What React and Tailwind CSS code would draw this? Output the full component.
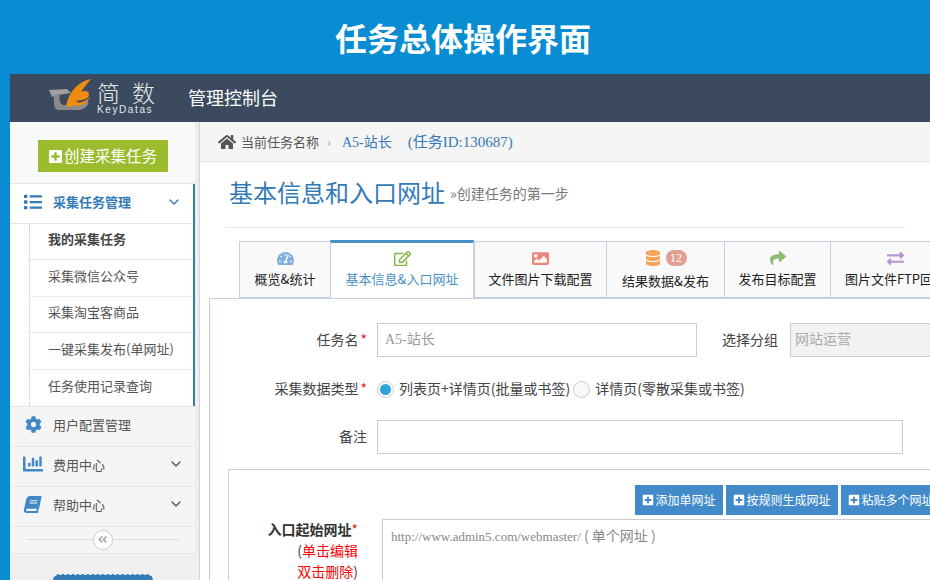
import React from 'react';
import {
	FaBook,
	FaChartBar,
	FaCog,
	FaDatabase,
	FaExchangeAlt,
	FaHome,
	FaImage,
	FaList,
	FaPlusSquare,
	FaRegEdit,
	FaShare,
	FaTachometerAlt,
	FaAngleDoubleLeft,
} from 'react-icons/fa';
import { ChevronDown } from 'lucide-react';

const subMenu = ['我的采集任务', '采集微信公众号', '采集淘宝客商品', '一键采集发布(单网址)', '任务使用记录查询'];

const urlButtons = [
	{ text: '添加单网址', width: 'w-[88px]' },
	{ text: '按规则生成网址', width: 'w-[112px]' },
	{ text: '粘贴多个网址', width: 'w-[100px]' },
];

const Logo = () => (
	<div className="flex h-[46px] items-center">
		<svg width="52" height="46" viewBox="0 0 52 46">
			<path d="M5 15 L23 14 L27 18 L14 20 L8 22 Z" fill="#a0a0a0" />
			<path d="M10 20 C10 27 9 34 14 35 L36 35 C43 33 45 29 44 26 C40 26 37 28 33 30 L19 30 C15 28 15 23 16 19 Z" fill="#8a8a8a" />
			<path d="M47 4 C36 6 25 15 22 31 L28 32 C32 24 39 13 47 4 Z" fill="#ee8b10" />
			<path d="M28 22 C34 15 46 14 45 20 C44 25 37 25 32 26 C35 29 41 27 46 22 C42 31 30 34 27 27 Z" fill="#ee8b10" />
		</svg>
		<div className="ml-[1px] flex flex-col items-start text-[#e8e8e8]">
			<span className="mb-[1px] text-[23px] leading-[23px] tracking-[12px] font-light">简数</span>
			<span className="font-['Liberation_Sans',sans-serif] text-[10px] leading-[10px] tracking-[1.6px]">KeyDatas</span>
		</div>
	</div>
);

const Sidebar = () => (
	<div className="flex w-[185px] shrink-0 flex-col overflow-hidden bg-[#f0f0f0]">
		<div className="flex h-[62px] shrink-0 items-center justify-center border-b border-[#e5e5e5] bg-[#f9f9f9] pt-[7px]">
			<button className="flex h-[32px] w-[130px] items-center justify-center gap-[1px] bg-[#9cbc2f] text-[15.5px] text-white">
				<FaPlusSquare size={15} />
				创建采集任务
			</button>
		</div>
		<div className="shrink-0 border-r-2 border-[#337ab7] bg-white">
			<div className="flex h-[40px] items-center border-b border-[#e5e5e5] pb-[3px] pl-[14px] pr-[11px] text-[#337ab7]">
				<FaList size={18} />
				<span className="ml-[11px] flex-1 text-[13px] font-bold">采集任务管理</span>
				<ChevronDown size={16} />
			</div>
			<div className="ml-[19px] border-l border-dotted border-[#b8c4d0]">
				{subMenu.map((name, i) => (
					<div
						key={name}
						className={`flex h-[36.4px] items-center border-b border-dotted border-[#ddd] pb-[5px] pl-[18px] text-[13px] last:border-b-0 ${i === 0 ? 'font-bold text-[#444]' : 'text-[#555]'}`}
					>
						{name}
					</div>
				))}
			</div>
		</div>
		<div className="flex h-[41px] shrink-0 items-center border-y border-[#e5e5e5] bg-[#f5f5f5] pb-[4px] pl-[15px] text-[13px] text-[#555]">
			<FaCog size={17} className="text-[#4188c6]" />
			<span className="ml-[11px]">用户配置管理</span>
		</div>
		<div className="flex h-[40px] shrink-0 items-center border-b border-[#e5e5e5] bg-[#f5f5f5] pb-[4px] pl-[13px] pr-[11px] text-[13px] text-[#555]">
			<FaChartBar size={20} className="text-[#4188c6]" />
			<span className="ml-[10px] flex-1">费用中心</span>
			<ChevronDown size={16} />
		</div>
		<div className="flex h-[40px] shrink-0 items-center border-b border-[#e5e5e5] bg-[#f5f5f5] pb-[4px] pl-[14px] pr-[11px] text-[13px] text-[#555]">
			<FaBook size={17} className="-skew-x-12 text-[#4188c6]" />
			<span className="ml-[12px] flex-1">帮助中心</span>
			<ChevronDown size={16} />
		</div>
		<div className="flex h-[27px] shrink-0 items-center border-b border-[#e5e5e5] bg-[#f5f5f5] px-[16px]">
			<div className="h-px flex-1 bg-[#ddd]" />
			<div className="flex h-[20px] w-[20px] items-center justify-center rounded-full border border-[#ccc] bg-white text-[#aaa]">
				<FaAngleDoubleLeft size={11} />
			</div>
			<div className="h-px flex-1 bg-[#ddd]" />
		</div>
		<div className="flex h-[26px] shrink-0 justify-center pt-[20px]">
			<div className="h-[10px] w-[100px] shrink-0 rounded-t-[6px] border-t border-dashed border-[#d8e4f0] bg-[#337ab7]" />
		</div>
	</div>
);

const tabs = [
	{ name: '概览&统计', icon: <FaTachometerAlt size={17} className="text-[#7fb0dc]" />, width: 'w-[91px]' },
	{ name: '基本信息&入口网址', icon: <FaRegEdit size={17} className="text-[#7cb342]" />, width: 'w-[144px]', active: true },
	{ name: '文件图片下载配置', icon: <FaImage size={17} className="text-[#e9877a]" />, width: 'w-[132px]' },
	{ name: '结果数据&发布', icon: <FaDatabase size={16} className="text-[#f6a35c]" />, width: 'w-[118px]', badge: '12' },
	{ name: '发布目标配置', icon: <FaShare size={16} className="text-[#8dbb72]" />, width: 'w-[106px]' },
	{ name: '图片文件FTP回传', icon: <FaExchangeAlt size={17} className="text-[#b794d8]" />, width: 'w-[130px]' },
];

const Tabs = () => (
	<div className="ml-[39px] flex h-[57px] items-stretch">
		{tabs.map((tab) => (
			<div
				key={tab.name}
				className={`relative flex shrink-0 flex-col items-center border-l border-[#c4d0df] ${tab.width} ${
					tab.active
						? 'z-10 -mt-px h-[58px] border-x border-t-[3px] border-t-[#4a90c2] bg-white pt-[6px] text-[13px] text-[#4a90c2]'
						: `border-t bg-[#f9f9f9] pt-[7px] text-[13px] text-[#222] ${tab.badge ? 'h-[58px] border-b-2' : 'border-b'}`
				}`}
			>
				<div className="flex h-[18px] items-center gap-[5px]">
					{tab.icon}
					{tab.badge && (
						<span className="flex h-[16px] w-[21px] items-center justify-center rounded-full bg-[#e2a092] font-['Liberation_Serif',serif] text-[12px] text-white">
							{tab.badge}
						</span>
					)}
				</div>
				<span className={`whitespace-nowrap ${tab.badge ? 'mt-[4px]' : 'mt-[2px]'}`}>{tab.name}</span>
			</div>
		))}
	</div>
);

const Label = ({ children, required }) => (
	<div className="w-[157px] shrink-0 pb-[2px] text-right text-[14px] text-[#444]">
		{children}
		{required && <span className="ml-[2px] text-[#e02222]">*</span>}
	</div>
);

const Form = () => (
	<div className="w-[760px] border-l border-t border-[#c4d0df] pt-[24px]">
		<div className="flex h-[34px] items-center">
			<Label required>任务名</Label>
			<input
				readOnly
				value="A5-站长"
				className="ml-[10px] h-[34px] w-[320px] border border-[#ccc] px-[7px] pb-[4px] font-['Liberation_Serif','Noto_Sans_CJK_SC',serif] text-[14px] text-[#999] outline-none"
			/>
			<span className="ml-[25px] whitespace-nowrap pb-[2px] text-[14px] text-[#444]">选择分组</span>
			<input
				readOnly
				value="网站运营"
				className="ml-[12px] h-[34px] w-[160px] border border-[#ccc] bg-[#f2f2f2] px-[4px] pb-[4px] text-[14px] text-[#aaa] outline-none"
			/>
		</div>
		<div className="mt-[22px] flex h-[20px] items-center">
			<Label required>采集数据类型</Label>
			<span className="ml-[10px] flex h-[17px] w-[17px] items-center justify-center rounded-full border border-[#c8d0d8] bg-white">
				<span className="h-[11px] w-[11px] rounded-full bg-[#2ca5d8]" />
			</span>
			<span className="ml-[5px] whitespace-nowrap pb-[2px] text-[14px] text-[#444]">列表页+详情页(批量或书签)</span>
			<span className="ml-[3px] h-[17px] w-[17px] rounded-full border border-[#ccc] bg-[#f9f9f9]" />
			<span className="ml-[5px] whitespace-nowrap pb-[2px] text-[14px] text-[#444]">详情页(零散采集或书签)</span>
		</div>
		<div className="mt-[21px] flex h-[34px] items-center">
			<Label>备注</Label>
			<div className="ml-[10px] h-[34px] w-[526px] border border-[#ccc]" />
		</div>
		<div className="ml-[18px] mt-[15px] h-[200px] w-[760px] border border-[#c4d0df]">
			<div className="ml-[406px] mt-[15px] flex h-[30px] gap-[3px] text-[12px] text-white">
				{urlButtons.map((btn) => (
					<button key={btn.text} className={`flex shrink-0 items-center justify-center gap-[1px] whitespace-nowrap bg-[#428bca] ${btn.width}`}>
						<FaPlusSquare size={12} />
						{btn.text}
					</button>
				))}
			</div>
			<div className="mt-[4px] flex">
				<div className="w-[130px] shrink-0 pr-[1px] text-right text-[14px] leading-[21px] text-[#333]">
					<div className="font-bold">
						入口起始网址<span className="font-normal text-[#e02222]">*</span>
					</div>
					<div className="text-[#ff0000]"><span className="text-[#444]">(</span>单击编辑</div>
					<div className="text-[#ff0000]">双击删除<span className="text-[#444]">)</span></div>
				</div>
				<div className="ml-[23px] h-[90px] flex-1 border border-[#ccc] px-[8px] py-[5px] text-[14px] text-[#888]">
					<span className="font-['Liberation_Serif',serif] text-[13px]">http://www.admin5.com/webmaster/</span> ( 单个网址 )
				</div>
			</div>
		</div>
	</div>
);

const App = () => {
	return (
		<div className="flex h-[580px] w-[930px] flex-col overflow-hidden bg-[#0a8cd2] font-['Noto_Sans_CJK_SC',sans-serif]">
			<div className="flex h-[74px] shrink-0 items-center justify-center pr-[4px] text-[32px] font-bold text-white">
				任务总体操作界面
			</div>
			<div className="ml-[10px] flex min-h-0 flex-1 flex-col overflow-hidden bg-white">
				<div className="flex h-[48px] shrink-0 items-center bg-[#3b4a5e] pl-[34px]">
					<Logo />
					<span className="ml-[21px] pb-[1px] text-[18px] text-white">管理控制台</span>
				</div>
				<div className="flex min-h-0 flex-1">
					<Sidebar />
					<div className="w-[5px] shrink-0 border-r border-[#d4d4d4] bg-[#eeeeee]" />
					<div className="min-w-0 flex-1 overflow-hidden">
						<div className="flex h-[40px] items-center border-b border-[#e5e5e5] bg-[#f5f5f5] pl-[18px] pt-[1px] text-[13px] text-[#555]">
							<FaHome size={18} className="text-[#555]" />
							<span className="ml-[5px]">当前任务名称</span>
							<span className="ml-[8px] text-[#aaa]">›</span>
							<span className="ml-[11px] font-['Liberation_Serif','Noto_Sans_CJK_SC',serif] text-[14px] text-[#337ab7]">A5-站长</span>
							<span className="ml-[16px] font-['Liberation_Serif','Noto_Sans_CJK_SC',serif] text-[15px] text-[#337ab7]">(任务ID:130687)</span>
						</div>
						<div className="mx-[25px] flex h-[66px] items-center border-b border-dotted border-[#ddd] pl-[4px] pb-[6px]">
							<span className="text-[24px] text-[#337ab7]">基本信息和入口网址</span>
							<span className="ml-[5px] mt-[4px] text-[14px] text-[#777]">»创建任务的第一步</span>
						</div>
						<div className="mt-[13px]">
							<Tabs />
						</div>
						<div className="ml-[9px]">
							<Form />
						</div>
					</div>
				</div>
			</div>
		</div>
	);
};

export default App;
